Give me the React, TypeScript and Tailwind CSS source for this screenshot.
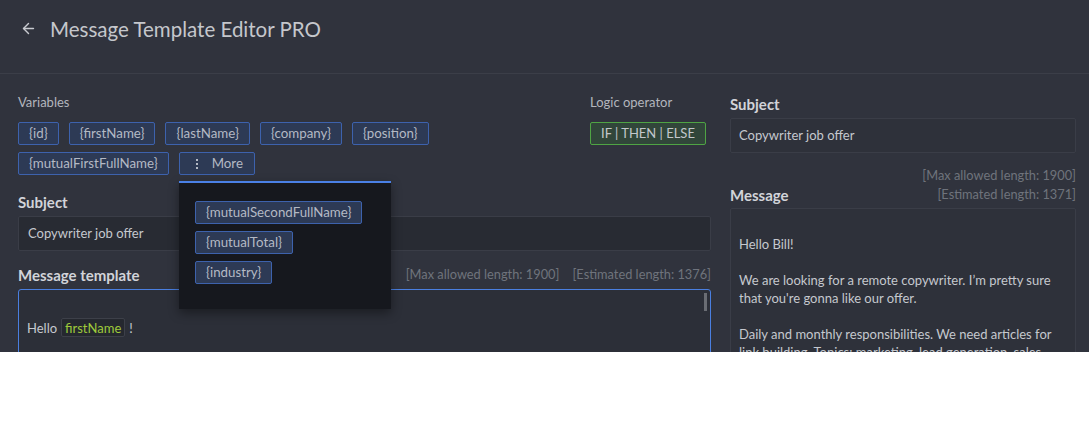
import { ArrowLeft } from "lucide-react";

const vars = ["{id}", "{firstName}", "{lastName}", "{company}", "{position}", "{mutualFirstFullName}"];
const moreVars = ["{mutualSecondFullName}", "{mutualTotal}", "{industry}"];

function Chip({ children }: { children: React.ReactNode }) {
  return (
    <span className="inline-flex h-[23px] items-center rounded-[2px] border border-[#3d62ad] bg-[#2d3a55] px-[10px] text-[13.3px] text-[#b4b9c4]">
      {children}
    </span>
  );
}

function Label({ children }: { children: React.ReactNode }) {
  return <div className="text-[15px] font-bold leading-[20px] text-[#d2d4d9]">{children}</div>;
}

export default function App() {
  return (
    <div
      className="relative h-[352px] overflow-hidden bg-[#30333d] text-[#c5c8ce]"
      style={{ fontFamily: "Lato, 'Noto Sans', sans-serif" }}
    >
      <header className="flex h-[74px] items-start border-b border-[#3b3e48] pl-[20px] pt-[16px]">
        <ArrowLeft size={17} strokeWidth={2} className="mt-[4px] text-[#c8cad0]" />
        <h1 className="ml-[13px] text-[20.5px] leading-[26px] text-[#c5c7cc]">Message Template Editor PRO</h1>
      </header>

      <div className="flex pl-[18px] pr-[13px]">
        {/* left column */}
        <div className="w-[693px]">
          <div className="flex pt-[19px]">
            <div className="w-[560px]">
              <div className="text-[13px] leading-[18px] text-[#b3b6bd]">Variables</div>
              <div className="mt-[11px] flex flex-wrap gap-x-[10px] gap-y-[7px]">
                {vars.map((v) => (
                  <Chip key={v}>{v}</Chip>
                ))}
                <span className="inline-flex h-[23px] items-center rounded-[2px] border border-[#3d62ad] bg-[#2d3a55] pl-[16px] pr-[11px] text-[13.3px] text-[#b4b9c4]">
                  <span className="mr-[14px] flex flex-col gap-[2px]">
                    <span className="h-[2px] w-[2px] bg-[#b4b9c4]" />
                    <span className="h-[2px] w-[2px] bg-[#b4b9c4]" />
                    <span className="h-[2px] w-[2px] bg-[#b4b9c4]" />
                  </span>
                  More
                </span>
              </div>
            </div>
            <div className="ml-[12px]">
              <div className="text-[13px] leading-[18px] text-[#b3b6bd]">Logic operator</div>
              <span className="mt-[11px] inline-flex h-[23px] items-center rounded-[2px] border border-[#4fa444] bg-[#31463a] px-[10px] text-[13px] text-[#c3c7cc]">
                IF | THEN | ELSE
              </span>
            </div>
          </div>

          <div className="mt-[17px]">
            <Label>Subject</Label>
          </div>
          <div className="mt-[4px] flex h-[35px] items-center rounded-[2px] border border-[#3a3d47] bg-[#282b33] px-[9px] text-[13px] text-[#c5c8ce]">
            Copywriter job offer
          </div>

          <div className="mt-[14px] flex items-center justify-between">
            <Label>Message template</Label>
            <div className="flex gap-[13px] text-[12.8px] text-[#6f737c]">
              <span>[Max allowed length: 1900]</span>
              <span>[Estimated length: 1376]</span>
            </div>
          </div>
          <div className="relative mt-[4px] h-[100px] rounded-[3px] border border-[#4a7fe0] bg-[#2c2f38] px-[8px] pt-[10px] text-[13px] leading-[18px]">
            <div className="h-[18px]" />
            <div className="flex items-center">
              Hello
              <span className="mx-[4px] inline-flex h-[19px] items-center rounded-[2px] border border-[#3d4049] bg-[#25282f] px-[3px] text-[#9fca3b]">
                firstName
              </span>
              !
            </div>
            <div className="absolute right-[3px] top-[3px] h-[18px] w-[3px] bg-[#6a6d74]" />
          </div>
        </div>

        {/* right column */}
        <div className="ml-[19px] w-[346px] pt-[20px]">
          <Label>Subject</Label>
          <div className="mt-[4px] flex h-[35px] items-center rounded-[2px] border border-[#3a3d47] bg-[#2e313a] px-[8px] text-[13px] text-[#c5c8ce]">
            Copywriter job offer
          </div>
          <div className="mt-[14px] text-right text-[12.8px] leading-[17px] text-[#6f737c]">[Max allowed length: 1900]</div>
          <div className="mt-[1px] flex items-center justify-between">
            <Label>Message</Label>
            <span className="text-[12.8px] text-[#6f737c]">[Estimated length: 1371]</span>
          </div>
          <div className="mt-[3px] h-[160px] rounded-[2px] border border-[#3a3d47] bg-[#2e313a] px-[8px] pt-[8px] text-[13px] leading-[18px] text-[#c5c8ce]">
            <div className="h-[18px]" />
            <div>Hello Bill!</div>
            <div className="h-[18px]" />
            <div>We are looking for a remote copywriter. I’m pretty sure that you're gonna like our offer.</div>
            <div className="h-[18px]" />
            <div>Daily and monthly responsibilities. We need articles for link building. Topics: marketing, lead generation, sales.</div>
          </div>
        </div>
      </div>

      {/* More dropdown */}
      <div className="absolute left-[179px] top-[181px] h-[128px] w-[212px] border-t-2 border-[#4a80e6] bg-[#16181e] px-[16px] pt-[18px] shadow-[0_4px_10px_rgba(0,0,0,0.4)]">
        <div className="flex flex-col items-start gap-[7px]">
          {moreVars.map((v) => (
            <Chip key={v}>{v}</Chip>
          ))}
        </div>
      </div>
    </div>
  );
}
